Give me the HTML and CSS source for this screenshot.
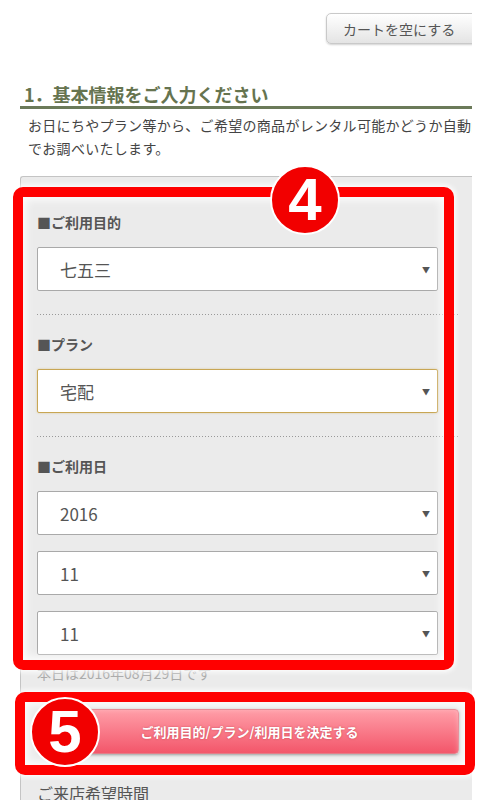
FILE: index.html
```html
<!DOCTYPE html>
<html lang="ja">

<head>
    <meta charset="UTF-8">
    <meta name="viewport" content="width=device-width, initial-scale=1.0">
    <title>基本情報の入力</title>
    <link rel="stylesheet" href="styles.css">
</head>

<body>
    <div class="page">
        <div class="cart-bar">
            <button type="button" class="cart-btn">カートを空にする</button>
        </div>

        <h2 class="step-title">1．基本情報をご入力ください</h2>
        <p class="step-lead">お日にちやプラン等から、ご希望の商品がレンタル可能かどうか自動的に<br>でお調べいたします。</p>

        <div class="panel">
            <div class="field">
                <div class="field-label">■ご利用目的</div>
                <div class="select"><span>七五三</span><span class="arrow">▼</span></div>
            </div>
            <div class="dots"></div>

            <div class="field">
                <div class="field-label">■プラン</div>
                <div class="select is-active"><span>宅配</span><span class="arrow">▼</span></div>
            </div>
            <div class="dots"></div>

            <div class="field">
                <div class="field-label">■ご利用日</div>
                <div class="select"><span>2016</span><span class="arrow">▼</span></div>
                <div class="select next"><span>11</span><span class="arrow">▼</span></div>
                <div class="select next"><span>11</span><span class="arrow">▼</span></div>
                <p class="today">本日は2016年08月29日です</p>
            </div>

            <button type="button" class="decide-btn">ご利用目的/プラン/利用日を決定する</button>

            <div class="field">
                <div class="visit-label">ご来店希望時間</div>
            </div>
        </div>
    </div>

    <!-- annotation marks laid over the screenshot -->
    <div class="mark-frame frame-4"></div>
    <div class="mark-frame frame-5"></div>
    <div class="mark-num num-4">4</div>
    <div class="mark-num num-5">5</div>
</body>

</html>
```

FILE: styles.css
```css
/* General Reset */
* {
    margin: 0;
    padding: 0;
    box-sizing: border-box;
}

body {
    position: relative;
    background: #fff;
    color: #555;
    font-family: "Noto Sans CJK JP", "Noto Sans", sans-serif;
    overflow: hidden;
}

/* Page column (clipped at the right like the original) */
.page {
    width: 452px;
    margin-left: 20px;
    overflow: hidden;
}

/* Top bar */
.cart-bar {
    display: flex;
    justify-content: flex-end;
    padding-top: 13px;
}

.cart-btn {
    width: 151px;
    height: 31px;
    margin-right: -5px;
    padding-left: 0;
    text-align: left;
    text-indent: 16px;
    background: linear-gradient(#ffffff, #e4e4e4);
    border: 1px solid #c9c9c9;
    border-radius: 5px;
    box-shadow: 0 1px 2px rgba(0, 0, 0, 0.18);
    font-family: inherit;
    font-size: 14px;
    color: #555;
}

/* Step heading */
.step-title {
    margin-top: 38px;
    padding-left: 4px;
    font-size: 18px;
    line-height: 24px;
    font-weight: bold;
    color: #66744f;
    border-bottom: 3px solid #6b7a59;
}

.step-lead {
    margin-top: 5px;
    padding-left: 8px;
    font-size: 14px;
    line-height: 23px;
    letter-spacing: 0.3px;
    color: #444;
    white-space: nowrap;
}

/* Form panel */
.panel {
    margin-top: 16px;
    padding: 35px 0 20px;
    background: #ebebeb;
    border: 1px solid #c4c4c4;
    border-right: none;
    border-radius: 3px 0 0 0;
}

.field {
    padding: 0 13px 0 16px;
}

.field-label {
    font-size: 14px;
    line-height: 20px;
    font-weight: bold;
    color: #555;
}

.select {
    display: flex;
    align-items: center;
    justify-content: space-between;
    width: 401px;
    height: 44px;
    margin-top: 15px;
    padding: 0 7px 0 22px;
    background: #fff;
    border: 1px solid #a9a9a9;
    border-radius: 2px;
    font-size: 17px;
    color: #555;
}

.select.next {
    margin-top: 16px;
}

.select.is-active {
    border-color: #c8a654;
    box-shadow: 0 0 2px rgba(200, 166, 84, 0.6);
}

.select .arrow {
    font-size: 8px;
    color: #555;
}

.dots {
    height: 1px;
    margin: 23px 13px 19px 16px;
    background-image: linear-gradient(to right, #999 1px, transparent 1px);
    background-size: 3px 1px;
}

.today {
    margin-top: 8px;
    font-size: 14px;
    line-height: 20px;
    color: #aaa;
}

.decide-btn {
    display: block;
    width: 419px;
    height: 45px;
    margin: 26px 0 0 19px;
    background: linear-gradient(#ff9ea8, #f3566a);
    border: 1px solid #e47a86;
    border-radius: 4px;
    box-shadow: 0 1px 3px rgba(0, 0, 0, 0.35);
    font-family: inherit;
    font-size: 13px;
    font-weight: bold;
    color: #fff;
    text-shadow: 0 0 2px rgba(150, 30, 40, 0.5);
}

.visit-label {
    margin-top: 28px;
    font-size: 16px;
    line-height: 22px;
    color: #555;
}

/* Annotation marks */
.mark-frame {
    position: absolute;
    border: 10px solid #ff0000;
    border-radius: 10px;
    box-shadow: 0 0 5px 2px rgba(255, 255, 255, 0.9), inset 0 0 8px 3px rgba(255, 255, 255, 0.85);
}

.frame-4 {
    left: 13px;
    top: 187px;
    width: 441px;
    height: 483px;
}

.frame-5 {
    left: 15px;
    top: 692px;
    width: 460px;
    height: 83px;
}

.mark-num {
    position: absolute;
    width: 70px;
    height: 70px;
    display: flex;
    align-items: center;
    justify-content: center;
    background: #f20000;
    border: 2px solid #fff;
    border-radius: 50%;
    font-family: "Liberation Sans", Arial, sans-serif;
    font-size: 60px;
    font-weight: bold;
    color: #fff;
    line-height: 1;
}

.num-4 {
    left: 270px;
    top: 165px;
}

.num-5 {
    left: 30px;
    top: 697px;
}
```
